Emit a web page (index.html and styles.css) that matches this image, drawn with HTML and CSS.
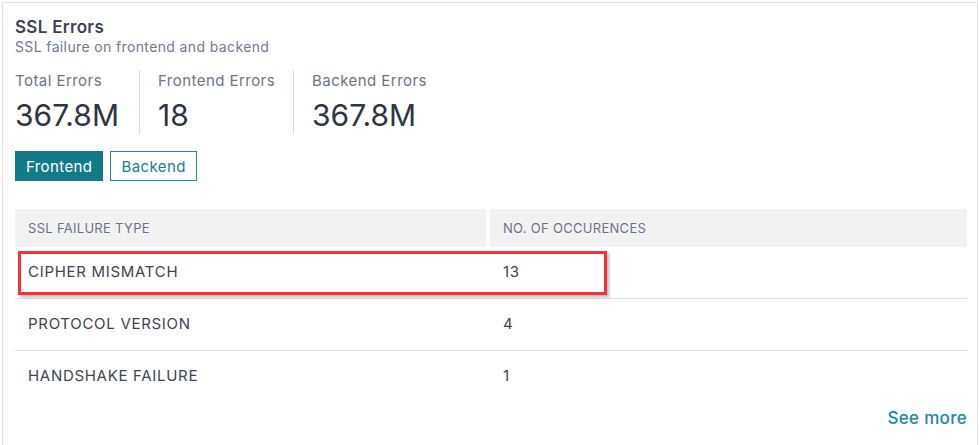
FILE: index.html
```html
<!DOCTYPE html>
<html>
<head>
<meta charset="utf-8">
<link rel="stylesheet" href="styles.css">
</head>
<body>
<div class="card">
  <h1 class="title">SSL Errors</h1>
  <p class="subtitle">SSL failure on frontend and backend</p>
  <div class="stats">
    <div class="stat">
      <div class="stat-label">Total Errors</div>
      <div class="stat-value">367.8M</div>
    </div>
    <div class="stat">
      <div class="stat-label">Frontend Errors</div>
      <div class="stat-value">18</div>
    </div>
    <div class="stat">
      <div class="stat-label">Backend Errors</div>
      <div class="stat-value">367.8M</div>
    </div>
  </div>
  <div class="toggle">
    <button class="btn btn-active">Frontend</button>
    <button class="btn">Backend</button>
  </div>
  <div class="table">
    <div class="thead">
      <div class="th">SSL FAILURE TYPE</div>
      <div class="th">NO. OF OCCURENCES</div>
    </div>
    <div class="row">
      <div class="td">CIPHER MISMATCH</div>
      <div class="td">13</div>
      <div class="highlight"></div>
    </div>
    <div class="row">
      <div class="td">PROTOCOL VERSION</div>
      <div class="td">4</div>
    </div>
    <div class="row">
      <div class="td">HANDSHAKE FAILURE</div>
      <div class="td">1</div>
    </div>
  </div>
  <div class="footer"><a class="see-more">See more</a></div>
</div>
</body>
</html>
```
FILE: styles.css
```css
html, body {
  margin: 0;
  padding: 0;
  background: #ffffff;
}
body {
  font-family: Inter, "Liberation Sans", Arial, sans-serif;
  color: #3c4250;
}
.card {
  margin: 2px 1px 0 2px;
  border: 1px solid #e2e2e2;
  border-bottom: none;
  height: 443px;
  box-sizing: border-box;
  padding: 14px 10px 0 12px;
}
.title {
  margin: 0;
  font-size: 17px;
  font-weight: 600;
  color: #3d4352;
  line-height: 20px;
  letter-spacing: 0.3px;
}
.subtitle {
  margin: 1px 0 0 0;
  font-size: 14px;
  color: #6e7a92;
  line-height: 18px;
  letter-spacing: 0.37px;
}
.stats {
  display: flex;
  margin-top: 14px;
}
.stat {
  padding: 0 18px 0 18px;
  border-left: 1px solid #dcdcdc;
  height: 64px;
}
.stat:first-child {
  padding-left: 0;
  border-left: none;
  padding-right: 20px;
}
.stat-label {
  font-size: 15px;
  color: #6b7487;
  line-height: 20px;
  padding-top: 1px;
  letter-spacing: 0.45px;
}
.stat-value {
  font-size: 30px;
  color: #2f3542;
  line-height: 36px;
  margin-top: 6px;
}
.toggle {
  display: flex;
  gap: 7px;
  margin-top: 17px;
}
.btn {
  font-family: Inter, "Liberation Sans", Arial, sans-serif;
  font-size: 15px;
  letter-spacing: 0.4px;
  height: 30px;
  padding: 0 10px;
  border: 1px solid #1f8a99;
  background: #ffffff;
  color: #177f8d;
  margin: 0;
  border-radius: 0;
}
.btn-active {
  background: #137b88;
  color: #ffffff;
  border-color: #137b88;
}
.table {
  margin-top: 28px;
}
.thead {
  display: grid;
  grid-template-columns: 471px 1fr;
  gap: 4px;
}
.th {
  background: #f2f2f2;
  height: 38px;
  line-height: 38px;
  padding-left: 13px;
  font-size: 13px;
  letter-spacing: 0.3px;
  color: #6b7487;
}
.row {
  position: relative;
  display: grid;
  grid-template-columns: 475px 1fr;
  height: 51px;
  border-bottom: 1px solid #dedede;
  align-items: center;
}
.row:last-child {
  border-bottom: none;
}
.td {
  padding-left: 13px;
  font-size: 15px;
  letter-spacing: 0.7px;
  color: #3e4452;
  margin-top: -2px;
}
.highlight {
  position: absolute;
  left: 3px;
  top: 4px;
  width: 583px;
  height: 38px;
  border: 3px solid #f5323c;
  box-shadow: 2px 2px 3px rgba(0, 0, 0, 0.3);
}
.footer {
  display: flex;
  justify-content: flex-end;
  margin-top: 6px;
}
.see-more {
  font-size: 17px;
  font-weight: 500;
  letter-spacing: 0.3px;
  color: #1a8a99;
  text-decoration: none;
}
```
